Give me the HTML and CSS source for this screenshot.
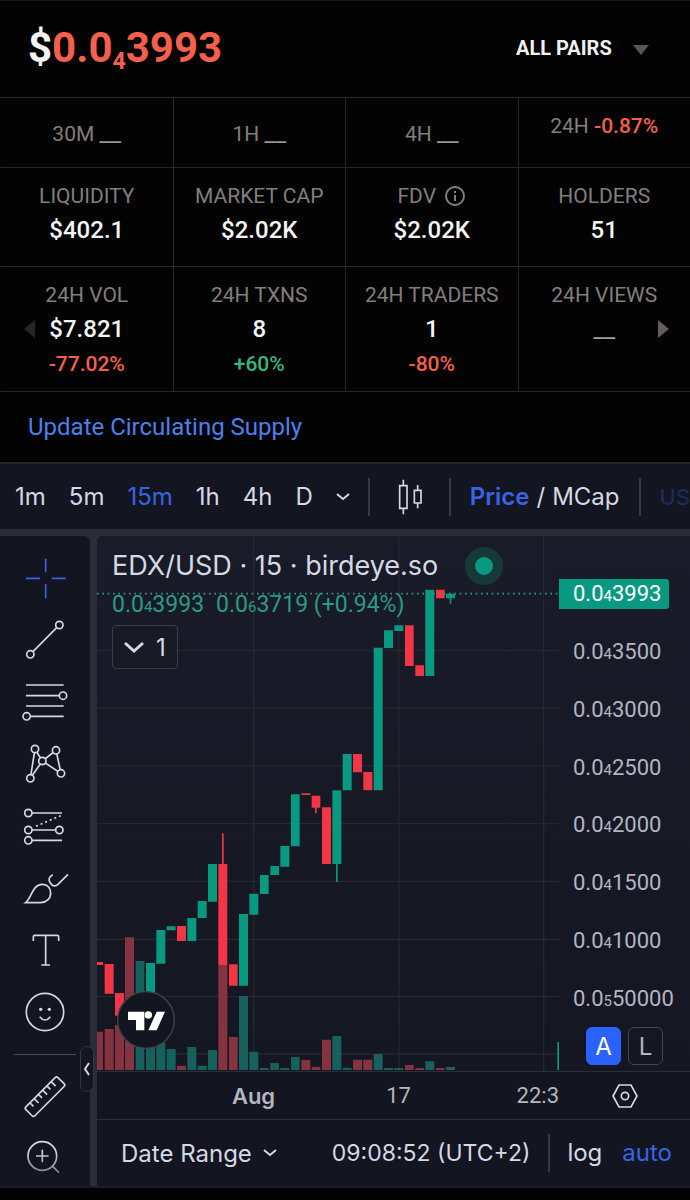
FILE: index.html
```html
<!DOCTYPE html>
<html lang="en">
<head>
<meta charset="utf-8">
<meta name="viewport" content="width=device-width, initial-scale=1">
<title>EDX/USD</title>
<link rel="stylesheet" href="styles.css">
</head>
<body>
<header class="header">
  <h1 class="price">$<span class="down">0.0<sub>4</sub>3993</span></h1>
  <div class="pairs">
    <select class="pairs-select" aria-label="Pairs"><option>ALL PAIRS</option></select>
    <svg class="pairs-arrow" viewBox="0 0 18 12" aria-hidden="true"><path d="M1 1h16L9 11z"/></svg>
  </div>
</header>

<section class="stats" aria-label="Token statistics">
  <div class="stat stat-short stat-empty"><p class="label">30M <span class="dash">__</span></p></div>
  <div class="stat stat-short stat-empty"><p class="label">1H <span class="dash">__</span></p></div>
  <div class="stat stat-short stat-empty"><p class="label">4H <span class="dash">__</span></p></div>
  <div class="stat stat-short"><p class="label">24H <span class="down">-0.87%</span></p></div>

  <div class="stat"><p class="label">LIQUIDITY</p><p class="value">$402.1</p></div>
  <div class="stat"><p class="label">MARKET CAP</p><p class="value">$2.02K</p></div>
  <div class="stat">
    <p class="label label-info">FDV
      <svg class="info" viewBox="0 0 22 22" aria-hidden="true"><circle cx="11" cy="11" r="9"/><path d="M11 10v6M11 6v2"/></svg>
    </p>
    <p class="value">$2.02K</p>
  </div>
  <div class="stat"><p class="label">HOLDERS</p><p class="value">51</p></div>

  <div class="stat"><p class="label">24H VOL</p><p class="value">$7.821</p><p class="change down">-77.02%</p>
    <button class="arrow arrow-prev" aria-label="Previous"><svg viewBox="0 0 12 20"><path d="M12 1v18L1 10z"/></svg></button>
  </div>
  <div class="stat"><p class="label">24H TXNS</p><p class="value">8</p><p class="change up">+60%</p></div>
  <div class="stat"><p class="label">24H TRADERS</p><p class="value">1</p><p class="change down">-80%</p></div>
  <div class="stat"><p class="label">24H VIEWS</p><p class="value value-empty">__</p>
    <button class="arrow arrow-next" aria-label="Next"><svg viewBox="0 0 12 20"><path d="M0 1v18l11-9z"/></svg></button>
  </div>
</section>

<p class="supply"><a href="#supply">Update Circulating Supply</a></p>

<main class="terminal">
  <nav class="toolbar" aria-label="Chart settings">
    <div class="intervals">
      <button>1m</button><button>5m</button><button class="active">15m</button><button>1h</button><button>4h</button><button>D</button>
      <button aria-label="More intervals"><svg class="chevron" viewBox="0 0 14 8"><path d="M1 1l6 5 6-5"/></svg></button>
    </div>
    <div class="chart-type">
      <button aria-label="Candles"><svg class="candles-icon" viewBox="0 0 78 108"><path d="M5 20h22v68H5zM16 2v18M16 88v18M49 34h20v38H49zM59 18v16M59 72v16"/></svg></button>
    </div>
    <div class="mode"><button class="active strong">Price</button><span>/</span><button>MCap</button></div>
    <div class="currency"><button>US</button></div>
  </nav>

  <div class="workspace">
    <aside class="tools" aria-label="Drawing tools">
      <button class="active" aria-label="Crosshair"><svg viewBox="0 0 150 150"><path d="M18 76h42M95 76h42M77 17v41M77 94v42"/></svg></button>
      <button aria-label="Trend line"><svg viewBox="0 0 150 150"><path d="M39 110l71-72"/><circle cx="118" cy="30" r="11"/><circle cx="31" cy="118" r="11"/></svg></button>
      <button aria-label="Fib retracement"><svg viewBox="0 0 150 150"><path d="M18 24h113M18 56h99M18 87h113M31 118h100"/><circle cx="129" cy="56" r="11"/><circle cx="20" cy="118" r="11"/></svg></button>
      <button aria-label="Patterns"><svg viewBox="0 0 150 150"><path d="M45 30L31 118L67 66ZM67 66L108 34L123 103Z"/><circle cx="45" cy="30" r="11"/><circle cx="108" cy="34" r="11"/><circle cx="67" cy="66" r="11"/><circle cx="123" cy="103" r="11"/><circle cx="31" cy="118" r="11"/></svg></button>
      <button aria-label="Forecast"><svg viewBox="0 0 150 150"><path d="M36 36h90M36 87h71M36 118h90"/><path stroke-dasharray="6 9" d="M48 76L122 44"/><circle cx="25" cy="36" r="11"/><circle cx="25" cy="87" r="11"/><circle cx="118" cy="87" r="11"/><circle cx="25" cy="118" r="11"/></svg></button>
      <button aria-label="Brush"><svg viewBox="0 0 150 150"><path d="M17 119C34 106 38 64 66 64C84 64 92 77 92 90C92 107 79 119 62 119ZM98 35C87 41 84 50 91 60C97 70 107 71 113 65L144 34"/></svg></button>
      <button aria-label="Text"><svg viewBox="0 0 150 150"><path d="M40 48V35q0-4 4-4h68q4 0 4 4v13M77 31v89M64 120h26"/></svg></button>
      <button aria-label="Icons"><svg viewBox="0 0 150 150"><circle cx="75" cy="75" r="56"/><path d="M59 89Q75 109 91 89"/><circle class="dot" cx="62" cy="67" r="5"/><circle class="dot" cx="88" cy="67" r="5"/></svg></button>
      <hr>
      <button class="short" aria-label="Measure"><svg viewBox="0 0 150 150"><g transform="translate(75 77) rotate(-45)"><rect x="-68" y="-19" width="136" height="38" rx="6"/><path d="M-45-18v14M-27-18v18M-9-18v14M9-18v18M27-18v14M45-18v18"/></g></svg></button>
      <button class="short fade" aria-label="Zoom in"><svg viewBox="0 0 150 150"><circle cx="67" cy="75" r="43"/><path d="M48 75h38M67 56v38M98 106l19 19"/></svg></button>
      <button class="collapse" aria-label="Hide tools"><svg viewBox="0 0 8 16"><path d="M6 2L2 8l4 6"/></svg></button>
    </aside>

    <div class="pane">
      <div class="chart">
        <div class="plot">
          <svg class="series" viewBox="0 0 1386 1605" preserveAspectRatio="none" role="img" aria-label="EDX/USD candles">
            <path class="grid" d="M0 344H1386M0 516H1386M0 690H1386M0 863H1386M0 1036H1386M0 1210H1386M0 1382H1386M0 1554H1386M470 0V1605M906 0V1605M1340 0V1605"/>
            <path class="vol-down" d="M0 1487h18v115H0zM23 1479h27v123H23zM54 1467h27v135H54zM84 1204h27v398H84zM240 1589h27v13h-27zM364 1287h27v315h-27zM396 1503h26v99h-26zM613 1572h27v30h-27zM644 1592h26v10h-26zM675 1511h27v91h-27zM768 1571h27v31h-27zM799 1571h27v31h-27zM924 1587h26v15h-26zM955 1596h26v6h-26zM1017 1596h26v6h-26z"/>
            <path class="vol-up" d="M116 1275h26v327h-26zM147 1500h27v102h-27zM178 1520h27v82h-27zM209 1539h27v63h-27zM271 1533h27v69h-27zM302 1589h27v13h-27zM333 1542h27v60h-27zM426 1380h27v222h-27zM457 1547h27v55h-27zM489 1596h26v6h-26zM520 1581h26v21h-26zM550 1596h27v6h-27zM582 1563h26v39h-26zM706 1500h27v102h-27zM737 1595h27v7h-27zM830 1554h27v48h-27zM861 1596h27v6h-27zM892 1596h27v6h-27zM985 1576h27v26h-27zM1047 1593h27v9h-27z"/>
            <path class="down-fill" d="M0 1278h18v9H0zM23 1284h27v89H23zM54 1371h27v68H54zM240 1170h27v45h-27zM364 984h27v303h-27zM375 892h5v92h-5zM396 1285h26v64h-26zM613 772h27v5h-27zM644 779h26v36h-26zM654 815h5v17h-5zM675 814h27v170h-27zM768 654h27v55h-27zM799 708h27v55h-27zM924 268h26v122h-26zM955 388h26v32h-26zM1017 161h26v26h-26z"/>
            <path class="up-fill" d="M147 1281h27v119h-27zM178 1182h27v101h-27zM209 1171h27v12h-27zM271 1146h27v69h-27zM302 1095h27v51h-27zM333 984h27v113h-27zM426 1134h27v215h-27zM457 1073h27v63h-27zM489 1017h26v57h-26zM520 990h26v27h-26zM550 930h27v62h-27zM582 775h26v156h-26zM706 763h27v221h-27zM717 984h5v54h-5zM737 654h27v109h-27zM830 335h27v428h-27zM861 283h27v53h-27zM892 268h27v17h-27zM985 161h27v259h-27zM1047 173h27v14h-27zM1058 187h5v16h-5zM1381 1518h5v84h-5z"/>
            <path class="last-price" d="M0 173H1386"/>
          </svg>
          <div class="legend">
            <div class="legend-title"><span>EDX/USD · 15 · birdeye.so</span><i class="status"></i></div>
            <div class="legend-values"><span>0.0<span class="zeros">4</span>3993</span><span>0.0<span class="zeros">6</span>3719 (+0.94%)</span></div>
            <button class="indicators"><svg viewBox="0 0 20 12"><path d="M1 2l9 8 9-8"/></svg>1</button>
          </div>
          <svg class="tv-logo" viewBox="0 0 174 174" aria-label="TradingView"><circle class="disc" cx="87" cy="87" r="85"/><path d="M33 62h49v56H57V87H33zM119 62h25l-25 56H94z"/><circle cx="94" cy="72" r="11"/></svg>
        </div>
        <div class="price-axis">
          <div class="tag">0.0<span class="zeros">4</span>3993</div>
          <div class="ticks">
            <span>0.0<span class="zeros">4</span>3500</span>
            <span>0.0<span class="zeros">4</span>3000</span>
            <span>0.0<span class="zeros">4</span>2500</span>
            <span>0.0<span class="zeros">4</span>2000</span>
            <span>0.0<span class="zeros">4</span>1500</span>
            <span>0.0<span class="zeros">4</span>1000</span>
            <span>0.0<span class="zeros">5</span>50000</span>
          </div>
          <div class="scale"><button class="on">A</button><button>L</button></div>
        </div>
      </div>
      <div class="time-axis">
        <div class="times"><b>Aug</b><span>17</span><span class="cut">22:3</span></div>
        <button class="gear" aria-label="Axis settings"><svg viewBox="0 0 78 72"><path d="M21 3h36l18 33-18 33H21L3 36z"/><circle cx="39" cy="36" r="11"/></svg></button>
      </div>
      <footer class="bottom">
        <button class="range">Date Range<svg class="chevron" viewBox="0 0 14 8"><path d="M1 1l6 5 6-5"/></svg></button>
        <button class="clock">09:08:52 (UTC+2)</button>
        <div class="scale-mode"><button>log</button><button class="active">auto</button></div>
      </footer>
    </div>
  </div>
</main>
</body>
</html>
```
FILE: styles.css
```css
* { box-sizing: border-box; }

body {
  margin: 0;
  background: #030303;
  color: #f4f4f4;
  font-family: Roboto, sans-serif;
}

h1, p { margin: 0; }

button {
  padding: 0;
  border: 0;
  background: none;
  color: inherit;
  font: inherit;
  cursor: pointer;
}

svg { display: block; fill: none; stroke: currentColor; }

.down { color: #f4604b; }
.up { color: #35b87c; }

/* Header */
.header {
  display: flex;
  align-items: center;
  justify-content: space-between;
  height: 98px;
  padding: 0 40px 2px 28px;
  border-top: 1px solid #151515;
  border-bottom: 1px solid #2a2828;
}
.price { font-size: 42px; line-height: 48px; font-weight: 700; }
.price sub { font-size: 23px; line-height: 0; vertical-align: -7px; }
.pairs { position: relative; }
.pairs-select {
  appearance: none;
  padding: 0 38px 0 0;
  border: 0;
  background: none;
  color: #f0f0f0;
  font: 700 20px/24px Roboto, sans-serif;
}
.pairs-arrow {
  position: absolute;
  top: 8px;
  right: 0;
  width: 18px;
  pointer-events: none;
  fill: #5b5555;
  stroke: none;
}

/* Statistics */
.stats { display: grid; grid-template-columns: repeat(4, 1fr); }
.stat {
  position: relative;
  padding: 16px 0 14px;
  border-bottom: 1px solid #2a2828;
  border-left: 1px solid #2a2828;
  text-align: center;
}
.stat:nth-child(4n + 1) { border-left-color: transparent; }
.stat-short { min-height: 70px; padding-bottom: 0; }
.stat-empty { padding-top: 23px; }
.label { color: #817e7d; font-size: 21px; line-height: 24px; }
.label .down { font-weight: 500; }
.label-info { display: flex; justify-content: center; align-items: center; gap: 8px; }
.dash { color: #9a9795; font-size: 24px; line-height: 1; }
.info { width: 22px; stroke-width: 2; }
.value { font-size: 24px; line-height: 44px; font-weight: 500; }
.value-empty { color: #a5a2a0; font-weight: 400; }
.change { font-size: 21px; line-height: 26px; font-weight: 500; }
.arrow { position: absolute; top: 52px; }
.arrow svg { width: 12px; height: 20px; stroke: none; fill: currentColor; }
.arrow-prev { left: 22px; color: #262524; }
.arrow-next { right: 20px; color: #625d5b; }

.supply { padding: 19px 28px 19px; font-size: 24px; line-height: 32px; }
.supply a { color: #4b80ea; text-decoration: none; }

/* Chart terminal */
.terminal {
  border-top: 2px solid #252426;
  border-bottom: 2px solid #1d1d20;
  background: #131520;
  color: #d6d8e3;
  font-family: Inter, sans-serif;
  font-size: 24px;
}
.active { color: #3963e6; }
.strong { font-weight: 600; }
.chevron { width: 14px; height: 8px; stroke-width: 2; }

.toolbar {
  display: flex;
  align-items: center;
  height: 65px;
  padding-left: 15px;
  overflow: hidden;
  white-space: nowrap;
}
.toolbar > div { display: flex; align-items: center; height: 38px; }
.toolbar > div + div { border-left: 2px solid #373944; }
.intervals { gap: 23px; padding-right: 18px; }
.chart-type { padding: 0 25px 0 28px; }
.candles-icon { width: 26px; height: 36px; stroke-width: 5; }
.mode { gap: 7px; padding: 0 19px; }
.currency { padding-left: 19px; color: #1c2b58; font-size: 22px; font-weight: 500; }

.workspace {
  display: grid;
  grid-template-columns: 90px minmax(0, 1fr);
  column-gap: 7px;
  padding-top: 7px;
  background: #2a2c38;
}
.tools {
  position: relative;
  display: flex;
  flex-direction: column;
  align-items: stretch;
  padding-top: 11px;
  border-top-right-radius: 6px;
  background: #131520;
}
.tools button { display: grid; place-items: center; height: 62px; }
.tools .short { height: 60px; }
.tools svg { width: 50px; height: 50px; stroke-width: 5; }
.tools svg circle { fill: #131520; }
.tools svg .dot { fill: currentColor; stroke: none; }
.tools hr { width: 62px; margin: 11px auto 11px 14px; border: 0; border-top: 1px solid #454752; }
.tools .fade svg { mask-image: linear-gradient(#000 40%, #0006); }
.tools .collapse {
  position: absolute;
  right: -4px;
  bottom: 94px;
  width: 14px;
  height: 46px;
  border: 1px solid #343641;
  border-radius: 7px;
  background: #131520;
}
.tools .collapse svg { width: 8px; height: 16px; stroke-width: 2; }

.pane { border-top-left-radius: 6px; background: #131520; overflow: hidden; }
.chart {
  display: grid;
  grid-template-columns: minmax(0, 1fr) 131px;
  background: linear-gradient(#191b28, #141622);
}
.plot { position: relative; }
.series { width: 100%; height: 535px; stroke: none; }
.series .grid { stroke: #242632; stroke-width: 4; }
.series .last-price { stroke: #389384; stroke-width: 5; stroke-dasharray: 5 11; }
.down-fill { fill: #f23645; }
.up-fill { fill: #089981; }
.vol-down { fill: #853340; }
.vol-up { fill: #16615b; }

.legend { position: absolute; top: 10px; left: 15px; }
.legend-title { display: flex; align-items: center; gap: 27px; font-size: 27px; line-height: 40px; }
.status {
  width: 38px;
  height: 38px;
  border: 10px solid #163836;
  border-radius: 50%;
  background: #089981;
}
.legend-values {
  display: flex;
  gap: 12px;
  color: #2b9b85;
  font-family: Roboto, sans-serif;
  font-size: 23px;
  line-height: 38px;
}
.zeros { font-size: 15px; line-height: 1; }
.indicators {
  display: flex;
  align-items: center;
  justify-content: center;
  gap: 12px;
  width: 66px;
  height: 44px;
  margin-top: 1px;
  border: 1px solid #3b3d48;
  border-radius: 4px;
  background: #181a26;
}
.indicators svg { width: 20px; stroke-width: 3; }
.tv-logo { position: absolute; left: 20px; bottom: 22px; width: 58px; fill: #fff; stroke: none; }
.tv-logo .disc { fill: #131520; stroke: #42444f; stroke-width: 4; }

.price-axis {
  display: flex;
  flex-direction: column;
  padding-top: 43px;
  color: #b3b5c0;
  font-family: Roboto, sans-serif;
  font-size: 22px;
}
.tag {
  width: 110px;
  padding-left: 14px;
  border-radius: 0 3px 3px 0;
  background: #089981;
  color: #fff;
  line-height: 30px;
}
.ticks { display: grid; grid-template-rows: repeat(7, 1fr); align-items: center; height: 404px; margin: 14px 0 0 14px; }
.scale { display: flex; gap: 7px; padding-left: 27px; font-family: Inter, sans-serif; }
.scale button {
  width: 35px;
  height: 38px;
  border: 1px solid #42444f;
  border-radius: 6px;
  font-size: 24px;
}
.scale .on { border-color: #2962ff; background: #2962ff; color: #fff; }

.time-axis {
  display: grid;
  grid-template-columns: minmax(0, 1fr) 131px;
  align-items: center;
  height: 49px;
  border-top: 1px solid #2c2e3a;
  border-bottom: 1px solid #2c2e3a;
  color: #b3b5c0;
  font-size: 22px;
}
.times { display: grid; grid-template-columns: 84fr 145fr 145fr 88fr; text-align: center; }
.times b { grid-column: 2; font-weight: 600; }
.times span { font-family: Roboto, sans-serif; }
.times .cut { text-align: right; }
.gear { justify-self: center; color: #d6d8e3; }
.gear svg { width: 26px; height: 24px; stroke-width: 5; }

.bottom { display: flex; align-items: center; height: 66px; padding: 0 18px 0 24px; white-space: nowrap; }
.range { display: flex; align-items: center; gap: 11px; }
.clock { margin-left: auto; padding-right: 18px; font-size: 23px; }
.scale-mode { display: flex; gap: 20px; padding-left: 17px; border-left: 2px solid #373944; line-height: 38px; }
```
